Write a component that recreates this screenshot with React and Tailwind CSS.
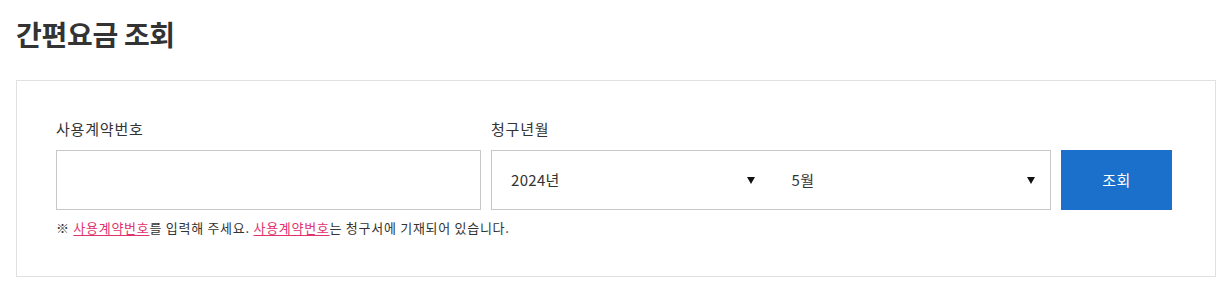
function Caret() {
  return (
    <svg width="8" height="7" viewBox="0 0 8 7" className="shrink-0">
      <path d="M0 0h8L4 7z" fill="#111" />
    </svg>
  );
}

export default function App() {
  const font = { fontFamily: '"Noto Sans CJK KR", "Noto Sans", sans-serif' };
  return (
    <div className="bg-white min-h-[284px] pl-4 pt-[14px]" style={font}>
      <h1 className="text-[28px] leading-[40px] font-bold text-[#333] tracking-[-0.3px]">간편요금 조회</h1>
      <div className="mt-[26px] w-[1200px] h-[197px] border border-[#e0e0e0] pl-[39px] pt-[36px]">
        <div className="flex gap-[10px]">
          <div className="flex flex-col">
            <label className="text-[15px] leading-[24px] tracking-[0.8px] text-[#333] mb-[9px]">사용계약번호</label>
            <input className="w-[425px] h-[60px] border border-[#c8c8c8] outline-none px-4 text-[15px]" />
          </div>
          <div className="flex flex-col">
            <label className="text-[15px] leading-[24px] tracking-[0.8px] text-[#333] mb-[9px]">청구년월</label>
            <div className="w-[560px] h-[60px] border border-[#c8c8c8] flex items-center">
              <div className="w-[280px] flex items-center justify-between pl-[19px] pr-[17px]">
                <span className="text-[15px] tracking-[0.3px] text-[#333]">2024년</span>
                <Caret />
              </div>
              <div className="w-[279px] flex items-center justify-between pl-[20px] pr-[15px]">
                <span className="text-[15px] tracking-[0.3px] text-[#333]">5월</span>
                <Caret />
              </div>
            </div>
          </div>
          <div className="flex flex-col justify-end">
            <button className="w-[111px] h-[60px] bg-[#1b70cb] text-white text-[15px] tracking-[0.5px]">조회</button>
          </div>
        </div>
        <p className="mt-[8px] text-[13px] leading-[20px] tracking-[0.72px] text-[#333]">
          ※ <span className="text-[#e0336e] underline underline-offset-2">사용계약번호</span>를 입력해 주세요.{" "}
          <span className="text-[#e0336e] underline underline-offset-2">사용계약번호</span>는 청구서에 기재되어 있습니다.
        </p>
      </div>
    </div>
  );
}
